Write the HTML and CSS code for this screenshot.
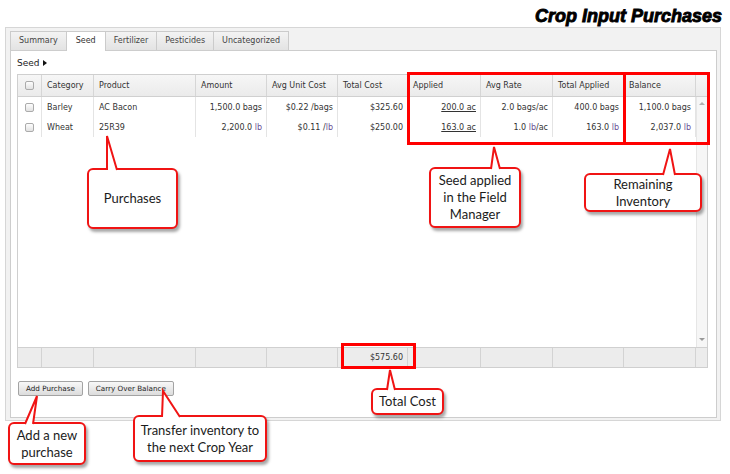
FILE: index.html
```html
<!DOCTYPE html>
<html>
<head>
<meta charset="utf-8">
<link rel="stylesheet" href="styles.css">
</head>
<body>
<div class="title">Crop Input Purchases</div>
<div class="outer">
  <div class="tabs">
    <div class="tab">Summary</div>
    <div class="tab active">Seed</div>
    <div class="tab">Fertilizer</div>
    <div class="tab">Pesticides</div>
    <div class="tab">Uncategorized</div>
  </div>
  <div class="panel">
    <div class="section-label">Seed <span class="tri"></span></div>
    <div class="grid">
      <div class="head cols">
        <div class="c cbc"><span class="cb"></span></div>
        <div class="c">Category</div>
        <div class="c">Product</div>
        <div class="c">Amount</div>
        <div class="c">Avg Unit Cost</div>
        <div class="c">Total Cost</div>
        <div class="c">Applied</div>
        <div class="c">Avg Rate</div>
        <div class="c">Total Applied</div>
        <div class="c">Balance</div>
        <div class="c last"></div>
      </div>
      <div class="body">
        <div class="rows">
          <div class="row rcols">
            <div class="c cbc"><span class="cb"></span></div>
            <div class="c">Barley</div>
            <div class="c">AC Bacon</div>
            <div class="c r">1,500.0 bags</div>
            <div class="c r">$0.22 /bags</div>
            <div class="c r">$325.60</div>
            <div class="c r"><span class="link">200.0 ac</span></div>
            <div class="c r">2.0 bags/ac</div>
            <div class="c r">400.0 bags</div>
            <div class="c r">1,100.0 bags</div>
          </div>
          <div class="row rcols">
            <div class="c cbc"><span class="cb"></span></div>
            <div class="c">Wheat</div>
            <div class="c">25R39</div>
            <div class="c r"><span>2,200.0 <span class="u">lb</span></span></div>
            <div class="c r"><span>$0.11 /<span class="u">lb</span></span></div>
            <div class="c r">$250.00</div>
            <div class="c r"><span class="link">163.0 ac</span></div>
            <div class="c r"><span>1.0 <span class="u">lb</span>/ac</span></div>
            <div class="c r"><span>163.0 <span class="u">lb</span></span></div>
            <div class="c r"><span>2,037.0 <span class="u">lb</span></span></div>
          </div>
        </div>
        <div class="vscroll"><span class="up"></span><span class="down"></span></div>
      </div>
      <div class="foot cols">
        <div class="c"></div>
        <div class="c"></div>
        <div class="c"></div>
        <div class="c"></div>
        <div class="c"></div>
        <div class="c r">$575.60</div>
        <div class="c"></div>
        <div class="c"></div>
        <div class="c"></div>
        <div class="c"></div>
        <div class="c last"></div>
      </div>
    </div>
    <div class="buttons">
      <button class="btn">Add Purchase</button>
      <button class="btn">Carry Over Balance</button>
    </div>
  </div>
</div>

<div class="hl hl-applied"></div>
<div class="hl hl-balance"></div>
<div class="hl hl-total"></div>

<div class="callout co-purchases">
  <svg class="tail" width="91" height="36" viewBox="0 0 91 36"><polygon points="20,36 20,0 30,36" fill="#fff"/><polyline points="20,35 20,1 30,35" fill="none" stroke="#f01414" stroke-width="2"/></svg>
  <span>Purchases</span>
</div>
<div class="callout co-seed">
  <svg class="tail" width="92" height="24" viewBox="0 0 92 24"><polygon points="62,24 65,0 71,24" fill="#fff"/><polyline points="62,23 65,1 71,23" fill="none" stroke="#f01414" stroke-width="2"/></svg>
  <span>Seed applied<br>in the Field<br>Manager</span>
</div>
<div class="callout co-remain">
  <svg class="tail" width="118" height="28" viewBox="0 0 118 28"><polygon points="79,28 86,0 91,28" fill="#fff"/><polyline points="79,27 86,1 91,27" fill="none" stroke="#f01414" stroke-width="2"/></svg>
  <span>Remaining<br>Inventory</span>
</div>
<div class="callout co-total">
  <svg class="tail" width="73" height="22" viewBox="0 0 73 22"><polygon points="16,22 19,0 24,22" fill="#fff"/><polyline points="16,21 19,1 24,21" fill="none" stroke="#f01414" stroke-width="2"/></svg>
  <span>Total Cost</span>
</div>
<div class="callout co-add">
  <svg class="tail" width="78" height="30" viewBox="0 0 78 30"><polygon points="17,30 29,0 25,30" fill="#fff"/><polyline points="17,29 29,1 25,29" fill="none" stroke="#f01414" stroke-width="2"/></svg>
  <span>Add a new<br>purchase</span>
</div>
<div class="callout co-transfer">
  <svg class="tail" width="134" height="28" viewBox="0 0 134 28"><polygon points="29,28 30,0 47,28" fill="#fff"/><polyline points="29,27 30,1 47,27" fill="none" stroke="#f01414" stroke-width="2"/></svg>
  <span>Transfer inventory to<br>the next Crop Year</span>
</div>
</body>
</html>
```

FILE: styles.css
```css
* { box-sizing: border-box; }
html, body { margin: 0; padding: 0; background: #fff; }
body {
  position: relative;
  width: 730px;
  height: 474px;
  overflow: hidden;
  font-family: "DejaVu Sans", Verdana, sans-serif;
  font-size: 8px;
  color: #333;
}

.title {
  height: 27px;
  padding: 6px 8px 0 0;
  text-align: right;
  font-family: "Liberation Sans", Arial, sans-serif;
  font-weight: bold;
  font-style: italic;
  font-size: 18px;
  line-height: 20px;
  color: #000;
  -webkit-text-stroke: 0.9px #000;
}

.outer {
  margin-left: 5px;
  width: 716px;
  height: 394px;
  border: 1px solid #d6d6d6;
  background: #f2f2f2;
  padding: 3px 3px 2px 4px;
  display: flex;
  flex-direction: column;
}

.tabs {
  display: flex;
  height: 19px;
  align-items: flex-end;
}
.tab {
  height: 19px;
  line-height: 18px;
  padding: 0 8px;
  border: 1px solid #cbcbcb;
  border-bottom: none;
  margin-right: -1px;
  background: linear-gradient(#f3f3f3, #e3e3e3);
  color: #444;
  white-space: nowrap;
}
.tab.active {
  background: #fff;
  height: 20px;
  margin-bottom: -1px;
  padding: 0 9px;
  position: relative;
  z-index: 1;
  color: #333;
}

.panel {
  flex: 1;
  background: #fff;
  border: 1px solid #cdcdcd;
  padding: 5px 8px 0 6px;
}

.section-label {
  height: 14px;
  line-height: 14px;
  margin-bottom: 4px;
  font-size: 9px;
  color: #222;
  display: flex;
  align-items: center;
}
.tri {
  display: inline-block;
  margin-left: 3px;
  width: 0;
  height: 0;
  border-top: 3px solid transparent;
  border-bottom: 3px solid transparent;
  border-left: 4px solid #111;
}

.grid {
  width: 691px;
  border: 1px solid #cfcfcf;
}
.cols {
  display: grid;
  grid-template-columns: 24px 52px 102px 71px 71px 70px 73px 72px 71px 72px 11px;
}
.rcols {
  display: grid;
  grid-template-columns: 24px 52px 102px 71px 71px 70px 73px 72px 71px 72px;
}
.c {
  border-right: 1px solid #d6d6d6;
  padding: 0 5px;
  white-space: nowrap;
  overflow: hidden;
  display: flex;
  align-items: center;
}
.c.r { justify-content: flex-end; padding-right: 4px; }
.c.last { border-right: none; }
.cbc { justify-content: center; padding: 0; }

.head {
  height: 22px;
  border-bottom: 1px solid #d0d0d0;
  background: linear-gradient(#f6f6f6, #ebebeb);
}
.head .c { padding-left: 5px; }
.head .cbc { padding: 0; }

.cb {
  display: inline-block;
  width: 9px;
  height: 9px;
  border: 1px solid #ababab;
  border-radius: 2px;
  background: linear-gradient(#fdfdfd, #e2e2e2);
}

.body {
  display: flex;
  height: 250px;
}
.rows { width: 678px; }
.row { height: 20px; }
.row .c { border-right-color: #e4e4e4; }
.link { text-decoration: underline; color: #333; }
.u { color: #6a4f95; }

.vscroll {
  width: 11px;
  background: #f6f6f6;
  border-left: 1px solid #e6e6e6;
  display: flex;
  flex-direction: column;
  justify-content: space-between;
  align-items: center;
  padding: 5px 0 6px;
}
.up, .down {
  width: 0;
  height: 0;
  border-left: 3px solid transparent;
  border-right: 3px solid transparent;
}
.up { border-bottom: 3px solid #b0b0b0; }
.down { border-top: 3px solid #999; }

.foot {
  height: 20px;
  border-top: 1px solid #d0d0d0;
  background: #ececec;
}
.foot .c { border-right-color: #d3d3d3; color: #333; }

.buttons {
  display: flex;
  gap: 5px;
  margin: 13px 0 0 1px;
}
.btn {
  height: 15px;
  padding: 0 7px;
  font-family: "DejaVu Sans", Verdana, sans-serif;
  font-size: 7.2px;
  color: #222;
  border: 1px solid #a3a3a3;
  border-radius: 2px;
  background: linear-gradient(#f8f8f8, #dcdcdc);
  line-height: 13px;
}

/* highlight overlays */
.hl {
  position: absolute;
  border: 3px solid #ff0000;
}
.hl-applied { left: 407px; top: 72px; width: 219px; height: 73px; }
.hl-balance { left: 623px; top: 72px; width: 87px; height: 73px; }
.hl-total { left: 341px; top: 343px; width: 75px; height: 26px; }

/* callouts */
.callout {
  position: absolute;
  background: #fff;
  border: 2px solid #f01414;
  border-radius: 6px;
  box-shadow: 2px 3px 3px rgba(0, 0, 0, 0.35);
  display: flex;
  align-items: center;
  justify-content: center;
  text-align: center;
  font-family: Lato, "Open Sans", sans-serif;
  font-size: 13px;
  line-height: 17px;
  color: #1b1b1b;
}
.tail {
  position: absolute;
  left: -2px;
  overflow: visible;
}
.co-purchases { left: 87px; top: 168px; width: 91px; height: 61px; }
.co-purchases .tail { top: -35px; }
.co-seed { left: 429px; top: 167px; width: 92px; height: 61px; }
.co-seed .tail { top: -23px; }
.co-remain { left: 584px; top: 173px; width: 118px; height: 39px; }
.co-remain .tail { top: -27px; }
.co-total { left: 371px; top: 388px; width: 73px; height: 27px; }
.co-total .tail { top: -21px; }
.co-add { left: 8px; top: 422px; width: 78px; height: 43px; }
.co-add .tail { top: -29px; }
.co-transfer { left: 133px; top: 415px; width: 134px; height: 47px; }
.co-transfer .tail { top: -27px; }
```
